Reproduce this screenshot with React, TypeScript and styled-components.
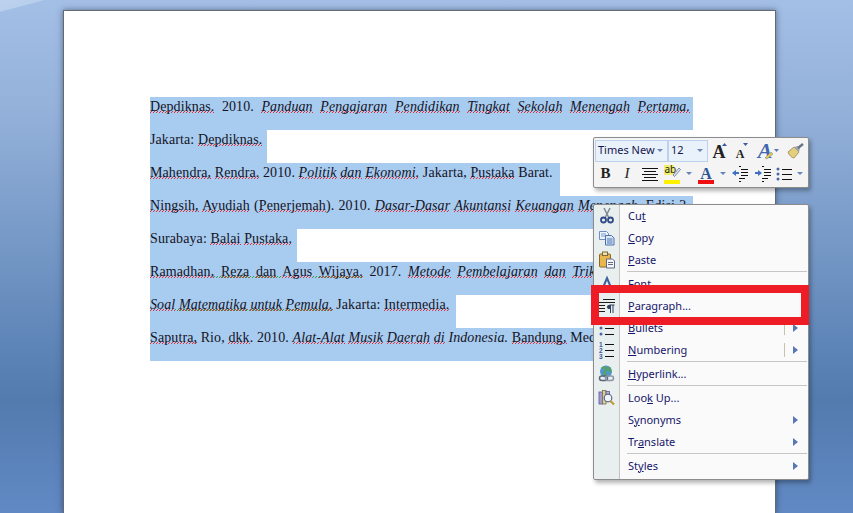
import React from 'react';
import styled, { createGlobalStyle } from 'styled-components';

const MENU_ITEMS = [
  { before: 'Cu', key: 't', after: '', icon: 'cut' },
  { before: '', key: 'C', after: 'opy', icon: 'copy' },
  { before: '', key: 'P', after: 'aste', icon: 'paste' },
  { separator: true },
  { before: '', key: 'F', after: 'ont', icon: 'font' },
  { before: '', key: 'P', after: 'aragraph...', icon: 'paragraph' },
  { before: '', key: 'B', after: 'ullets', icon: 'bullets', split: true, sub: true },
  { before: '', key: 'N', after: 'umbering', icon: 'numbering', split: true, sub: true },
  { separator: true },
  { before: '', key: 'H', after: 'yperlink...', icon: 'link' },
  { separator: true },
  { before: 'Loo', key: 'k', after: ' Up...', icon: 'lookup' },
  { before: 'S', key: 'y', after: 'nonyms', sub: true },
  { before: 'Tr', key: 'a', after: 'nslate', sub: true },
  { separator: true },
  { before: 'St', key: 'y', after: 'les', sub: true },
];

// words with the red spelling squiggle
const Words = ({ text }: { text: string }) => (
  <>
    {text.split(' ').map((w, i) => (
      <React.Fragment key={i}>
        {i > 0 && ' '}
        <Spell>{w}</Spell>
      </React.Fragment>
    ))}
  </>
);

const MenuIcon = ({ name }: { name?: string }) => {
  switch (name) {
    case 'cut':
      return (
        <svg width="18" height="18" viewBox="0 0 18 18">
          <path d="M6 1l4.500 9M12 1L7.500 10" stroke="#7d8796" strokeWidth="1.500" fill="none" />
          <circle cx="5.500" cy="13" r="2.500" fill="none" stroke="#2d4a86" strokeWidth="1.800" />
          <circle cx="12.500" cy="13" r="2.500" fill="none" stroke="#2d4a86" strokeWidth="1.800" />
        </svg>
      );
    case 'copy':
      return (
        <svg width="18" height="18" viewBox="0 0 18 18">
          <path d="M1.500 2.500h7l2 2v6h-9z" fill="#eef4fc" stroke="#6d8fc4" />
          <path d="M3 5h5M3 7h5" stroke="#7d9ccc" />
          <path d="M7.500 6.500h6l2.500 2.500v7H7.500z" fill="#dbe8f8" stroke="#4a70ad" />
          <path d="M9 10h5.500M9 12h5.500M9 14h5.500" stroke="#4a70ad" />
        </svg>
      );
    case 'paste':
      return (
        <svg width="18" height="18" viewBox="0 0 18 18">
          <rect x="1.500" y="3" width="11" height="13" rx="1" fill="#e8b64c" stroke="#8a6a2a" />
          <rect x="4.500" y="1" width="5" height="3.500" fill="#f3e3b0" stroke="#7a6a3a" />
          <path d="M8.500 8h6l2 2v7h-8z" fill="#f6f6f8" stroke="#5f6a86" />
          <path d="M10 11.500h5M10 13.500h5" stroke="#5f6a86" />
        </svg>
      );
    case 'font':
      return (
        <svg width="18" height="18" viewBox="0 0 18 18">
          <path d="M4 15L9 3l5 12M6 11h6" stroke="#3c5f9f" strokeWidth="2" fill="none" />
        </svg>
      );
    case 'paragraph':
      return (
        <svg width="18" height="18" viewBox="0 0 18 18">
          <path d="M5 2.500h12M1 5.500h16M1 8.500h6M1 11.500h6M1 14.500h6" stroke="#1c1c1c" />
          <path d="M11.500 8h5M12.500 8v8M15 8v8" stroke="#2f3f5f" />
          <path d="M9 10c0-1.400 1-2 2.500-2h1v4h-1C10 12 9 11.400 9 10z" fill="#2f3f5f" />
        </svg>
      );
    case 'bullets':
      return (
        <svg width="18" height="18" viewBox="0 0 18 18">
          <circle cx="3" cy="3" r="1.500" fill="#4a68a8" />
          <circle cx="3" cy="9" r="1.500" fill="#4a68a8" />
          <circle cx="3" cy="15" r="1.500" fill="#4a68a8" />
          <path d="M7 3.500h9M7 9.500h9M7 15.500h9" stroke="#111" />
        </svg>
      );
    case 'numbering':
      return (
        <svg width="18" height="18" viewBox="0 0 18 18">
          <NumberMark x="1" y="6">1</NumberMark>
          <NumberMark x="1" y="12">2</NumberMark>
          <NumberMark x="1" y="17.500">3</NumberMark>
          <path d="M7 3.500h9M7 9.500h9M7 15.500h9" stroke="#111" />
        </svg>
      );
    case 'link':
      return (
        <svg width="18" height="18" viewBox="0 0 18 18">
          <circle cx="8" cy="6.500" r="6" fill="#4f96cf" />
          <path d="M4 3c2-1 4-.500 4.500 1S6 6 6.500 8s2 2 2 3.500M11 2l1 4 1.500 1" stroke="#57a548" strokeWidth="2" fill="none" />
          <rect x="1.500" y="11" width="8" height="4.500" rx="2.200" fill="none" stroke="#59657a" strokeWidth="1.500" />
          <rect x="7.500" y="11" width="8" height="4.500" rx="2.200" fill="none" stroke="#8a95a6" strokeWidth="1.500" />
        </svg>
      );
    case 'lookup':
      return (
        <svg width="18" height="18" viewBox="0 0 18 18">
          <rect x="1" y="3" width="3.500" height="12" fill="#a49ad0" stroke="#5b5a94" strokeWidth=".8" />
          <rect x="4.500" y="1.500" width="3.500" height="13.500" fill="#d8cf9a" stroke="#77704a" strokeWidth=".8" />
          <rect x="8" y="2.500" width="3.500" height="8" fill="#b8b4d8" stroke="#5b5a94" strokeWidth=".8" />
          <circle cx="10" cy="9" r="3.800" fill="#eef5fb" stroke="#5b6a82" strokeWidth="1.200" />
          <path d="M12.500 12l3.500 3.500" stroke="#c29a34" strokeWidth="2.200" />
        </svg>
      );
    default:
      return null;
  }
};

const App = () => {
  return (
    <>
      <GlobalStyle />
      <Desktop>
        <Page>
          <SelectedLine $justify $width={543}>
            <Words text="Depdiknas." /> 2010. <em><Words text="Panduan Pengajaran Pendidikan Tingkat Sekolah Menengah Pertama." /></em>
          </SelectedLine>
          <SelectedLine $width={117}>
            Jakarta: <Words text="Depdiknas." />
          </SelectedLine>
          <SelectedLine $width={410}>
            <Words text="Mahendra, Rendra." /> 2010. <em><Words text="Politik dan Ekonomi." /></em> Jakarta, <Spell>Pustaka</Spell> Barat.
          </SelectedLine>
          <SelectedLine $justify $width={543}>
            <Words text="Ningsih, Ayudiah" /> (<Spell>Penerjemah</Spell>). 2010. <em><Words text="Dasar-Dasar Akuntansi Keuangan Menengah." /></em> Edisi 2.
          </SelectedLine>
          <SelectedLine $width={147}>
            Surabaya: <Words text="Balai Pustaka." />
          </SelectedLine>
          <SelectedLine $justify $width={543}>
            <Grammar><Words text="Ramadhan, Reza dan Agus Wijaya." /></Grammar> 2017. <em><Words text="Metode Pembelajaran dan Trik Jitu Menjawab" /></em>
          </SelectedLine>
          <SelectedLine $width={306}>
            <em><Grammar><Words text="Soal Matematika untuk Pemula." /></Grammar></em> Jakarta: <Spell>Intermedia.</Spell>
          </SelectedLine>
          <SelectedLine $width={543}>
            <Words text="Saputra," /> Rio, <Spell>dkk</Spell>. 2010. <em><Words text="Alat-Alat Musik Daerah di" /> Indonesia.</em> <Spell>Bandung,</Spell> Media Indah.
          </SelectedLine>
        </Page>

        <MiniToolbar>
          <ToolRow>
            <Combo $width={73}>
              Times New
              <DropArrow />
            </Combo>
            <Combo $width={40}>
              12
              <DropArrow />
            </Combo>
            <ToolCell $width={21}>
              <svg width="21" height="22" viewBox="0 0 21 22">
                <FontMark x="11" y="18" fontSize="18" fill="#222">A</FontMark>
                <path d="M14 6l2.500-3L19 6z" fill="#3a5a9a" />
              </svg>
            </ToolCell>
            <ToolCell $width={21}>
              <svg width="21" height="22" viewBox="0 0 21 22">
                <FontMark x="11" y="18" fontSize="12" fill="#222">A</FontMark>
                <path d="M14 3h5l-2.500 3z" fill="#3a5a9a" />
              </svg>
            </ToolCell>
            <ToolCell $width={33}>
              <svg width="33" height="22" viewBox="0 0 33 22">
                <FontMark x="15" y="18" fontSize="22" fontStyle="italic" fill="#3f66ae">A</FontMark>
                <path d="M15 18l6-6 2 2-6 5z" fill="#e8c94a" stroke="#7a8aa8" strokeWidth=".6" />
                <path d="M24 9h5l-2.500 3z" fill="#5b78b4" />
              </svg>
            </ToolCell>
            <ToolCell $width={22}>
              <svg width="22" height="22" viewBox="0 0 22 22">
                <path d="M5 12l6-5 5 5-5 6c-2 0-5-3-6-6z" fill="#e4cf7e" stroke="#97834a" strokeWidth=".8" />
                <path d="M11 7l4-1 2 2-1 4z" fill="#9ea5ad" />
                <path d="M15 8l5-4" stroke="#6b7484" strokeWidth="2.500" />
              </svg>
            </ToolCell>
          </ToolRow>
          <ToolRow>
            <BoldGlyph>B</BoldGlyph>
            <ItalicGlyph>I</ItalicGlyph>
            <ToolCell $width={23}>
              <svg width="16" height="14" viewBox="0 0 16 14">
                <path d="M0 1.500h16M2 4.500h12M0 7.500h16M2 10.500h12M0 13.500h16" stroke="#111" />
              </svg>
            </ToolCell>
            <ToolCell $width={22}>
              <svg width="18" height="20" viewBox="0 0 18 20">
                <rect x="1" y="1" width="10" height="10" fill="#f2ef6a" />
                <HighlightMark x="1.500" y="9">ab</HighlightMark>
                <path d="M10 11l6-7 1.500 1.500-6 7z" fill="#dfe7f2" stroke="#5f7596" strokeWidth=".8" />
                <rect x="1" y="16" width="16" height="4" fill="#fff200" />
              </svg>
            </ToolCell>
            <ToolCell $width={11}><SmallArrow /></ToolCell>
            <ToolCell $width={23}>
              <svg width="16" height="20" viewBox="0 0 16 20">
                <FontMark x="8" y="15" fontSize="16" fill="#2f5597">A</FontMark>
                <rect x="0" y="16" width="16" height="4" fill="#ee1010" />
              </svg>
            </ToolCell>
            <ToolCell $width={11}><SmallArrow /></ToolCell>
            <ToolCell $width={23}>
              <svg width="16" height="16" viewBox="0 0 16 16">
                <path d="M7 .500h2M9 3.500h7M9 6.500h7M9 9.500h7M7 12.500h6M7 15.500h2" stroke="#111" />
                <path d="M0 7l4-3v2h3v2H4v2z" fill="#3f70c0" />
              </svg>
            </ToolCell>
            <ToolCell $width={23}>
              <svg width="16" height="16" viewBox="0 0 16 16">
                <path d="M7 .500h2M9 3.500h7M9 6.500h7M9 9.500h7M7 12.500h6M7 15.500h2" stroke="#111" />
                <path d="M7 7L3 4v2H0v2h3v2z" fill="#3f70c0" />
              </svg>
            </ToolCell>
            <ToolCell $width={20}>
              <svg width="16" height="14" viewBox="0 0 16 14">
                <circle cx="2" cy="2" r="1.500" fill="#4a68a8" />
                <circle cx="2" cy="7" r="1.500" fill="#4a68a8" />
                <circle cx="2" cy="12" r="1.500" fill="#4a68a8" />
                <path d="M6 2.500h10M6 7.500h10M6 12.500h10" stroke="#111" />
              </svg>
            </ToolCell>
            <ToolCell $width={12}><SmallArrow /></ToolCell>
          </ToolRow>
        </MiniToolbar>

        <ContextMenu>
          {MENU_ITEMS.map((item, index) =>
            item.separator ? (
              <MenuSeparator key={index} />
            ) : (
              <MenuRow key={index}>
                <MenuIconCell>
                  <MenuIcon name={item.icon} />
                </MenuIconCell>
                <MenuLabel>
                  {item.before}
                  <u>{item.key}</u>
                  {item.after}
                </MenuLabel>
                {item.split && <SplitLine />}
                {item.sub && <SubArrow />}
              </MenuRow>
            )
          )}
        </ContextMenu>

        <Highlight />
      </Desktop>
    </>
  );
};

export default App;

const GlobalStyle = createGlobalStyle`
  html, body {
    margin: 0;
    padding: 0;
    overflow: hidden;
  }
  svg {
    overflow: visible;
  }
`;

const Desktop = styled.div`
  position: relative;
  box-sizing: border-box;
  width: 853px;
  height: 513px;
  overflow: hidden;
  padding: 10px 77px 0 63px;
  display: flex;
  background:
    linear-gradient(165deg, #bdd2ee 0, #b8cfed 11px, transparent 12px),
    linear-gradient(180deg, #a3bfe6 0, #94b1da 110px, #7497c5 250px, #5f86b8 340px, #547bae 400px, #6189c4 513px);
`;

const Page = styled.div`
  flex: 1;
  box-sizing: border-box;
  background: #ffffff;
  border: 1px solid #646a73;
  border-bottom: none;
  padding: 86px 0 0 86px;
  box-shadow: 0 0 6px rgba(30, 40, 60, 0.55);
  font-family: 'Liberation Serif', 'Times New Roman', serif;
  font-size: 14px;
  letter-spacing: 0.1px;
  color: #14141f;
`;

const SelectedLine = styled.div<{ $justify?: boolean; $width: number }>`
  box-sizing: border-box;
  width: ${(p) => p.$width}px;
  height: 33px;
  padding-right: 3px;
  line-height: 19px;
  white-space: nowrap;
  background: #a8cbf0;
  ${(p) =>
    p.$justify &&
    `
    white-space: normal;
    text-align: justify;
    text-align-last: justify;
  `}
`;

const Spell = styled.span`
  background-image:
    linear-gradient(90deg, #e0303a 1px, transparent 1px),
    linear-gradient(90deg, #e0303a 1px, transparent 1px);
  background-size: 3px 1px;
  background-repeat: repeat-x;
  background-position: 0 calc(100% - 1px), 1px calc(100% - 2px);
`;

const Grammar = styled.span`
  background-image:
    linear-gradient(90deg, #2f9a4a 1px, transparent 1px),
    linear-gradient(90deg, #2f9a4a 1px, transparent 1px);
  background-size: 3px 1px;
  background-repeat: repeat-x;
  background-position: 0 calc(100% - 1px), 1px calc(100% - 2px);
`;

const FontMark = styled.text`
  font-family: 'Liberation Serif', serif;
  font-weight: 700;
  text-anchor: middle;
`;

const NumberMark = styled.text`
  font-family: 'Liberation Sans', sans-serif;
  font-size: 6.500px;
  font-weight: 700;
  fill: #3a5a9a;
`;

const HighlightMark = styled.text`
  font-family: 'Noto Sans', sans-serif;
  font-size: 10px;
  fill: #222;
`;

const MiniToolbar = styled.div`
  position: absolute;
  left: 593px;
  top: 137px;
  box-sizing: border-box;
  width: 216px;
  height: 51px;
  padding: 1px;
  background: #f4f4f4;
  border: 1px solid #8c8c8c;
  border-radius: 2px;
  box-shadow: 2px 3px 4px rgba(0, 0, 0, 0.3);
  font-family: 'Noto Sans', sans-serif;
  font-size: 11px;
  color: #16164e;
`;

const ToolRow = styled.div`
  display: flex;
  align-items: center;
  height: 23px;
`;

const Combo = styled.div<{ $width: number }>`
  display: flex;
  align-items: center;
  justify-content: space-between;
  box-sizing: border-box;
  width: ${(p) => p.$width}px;
  height: 22px;
  padding: 0 3px 2px 2px;
  background: #e9f1fb;
  border: 1px solid #bcd2ec;
  white-space: nowrap;
`;

const DropArrow = styled.span`
  width: 0;
  height: 0;
  margin-top: 2px;
  margin-right: 1px;
  border-left: 3px solid transparent;
  border-right: 3px solid transparent;
  border-top: 3px solid #6684b8;
`;

const SmallArrow = styled(DropArrow)`
  margin: 0;
`;

const ToolCell = styled.div<{ $width: number }>`
  display: flex;
  align-items: center;
  justify-content: center;
  width: ${(p) => p.$width}px;
  height: 22px;
  flex: none;
`;

const BoldGlyph = styled.div`
  width: 21px;
  text-align: center;
  font-family: 'Liberation Serif', serif;
  font-weight: 700;
  font-size: 15px;
  color: #222;
`;

const ItalicGlyph = styled(BoldGlyph)`
  width: 22px;
  font-style: italic;
  font-weight: 400;
`;

const ContextMenu = styled.div`
  position: absolute;
  left: 593px;
  top: 204px;
  box-sizing: border-box;
  width: 216px;
  height: 276px;
  display: flex;
  flex-direction: column;
  background: linear-gradient(90deg, #e9eeee 25px, #c4c4c0 25px, #c4c4c0 26px, #fafafa 26px);
  border: 1px solid #8c8c8c;
  border-radius: 2px;
  box-shadow: 2px 3px 4px rgba(0, 0, 0, 0.3);
  font-family: 'Noto Sans', sans-serif;
  font-size: 11px;
  color: #16166b;
`;

const MenuRow = styled.div`
  display: flex;
  align-items: center;
  height: 22px;
  flex: none;
`;

const MenuIconCell = styled.div`
  display: flex;
  align-items: center;
  justify-content: center;
  width: 25px;
  flex: none;
`;

const MenuLabel = styled.span`
  flex: 1;
  padding: 0 0 2px 9px;
  white-space: nowrap;
`;

const SplitLine = styled.span`
  width: 1px;
  height: 14px;
  background: #c5c2b0;
  margin-right: 8px;
`;

const SubArrow = styled.span`
  width: 0;
  height: 0;
  margin-right: 10px;
  border-top: 4px solid transparent;
  border-bottom: 4px solid transparent;
  border-left: 5px solid #5a76b4;
`;

const MenuSeparator = styled.div`
  flex: none;
  height: 1px;
  margin: 0 1px 1px 33px;
  background: #c6c6c6;
`;

const Highlight = styled.div`
  position: absolute;
  left: 591px;
  top: 285px;
  box-sizing: border-box;
  width: 218px;
  height: 40px;
  border: 8px solid #ee1c25;
`;
